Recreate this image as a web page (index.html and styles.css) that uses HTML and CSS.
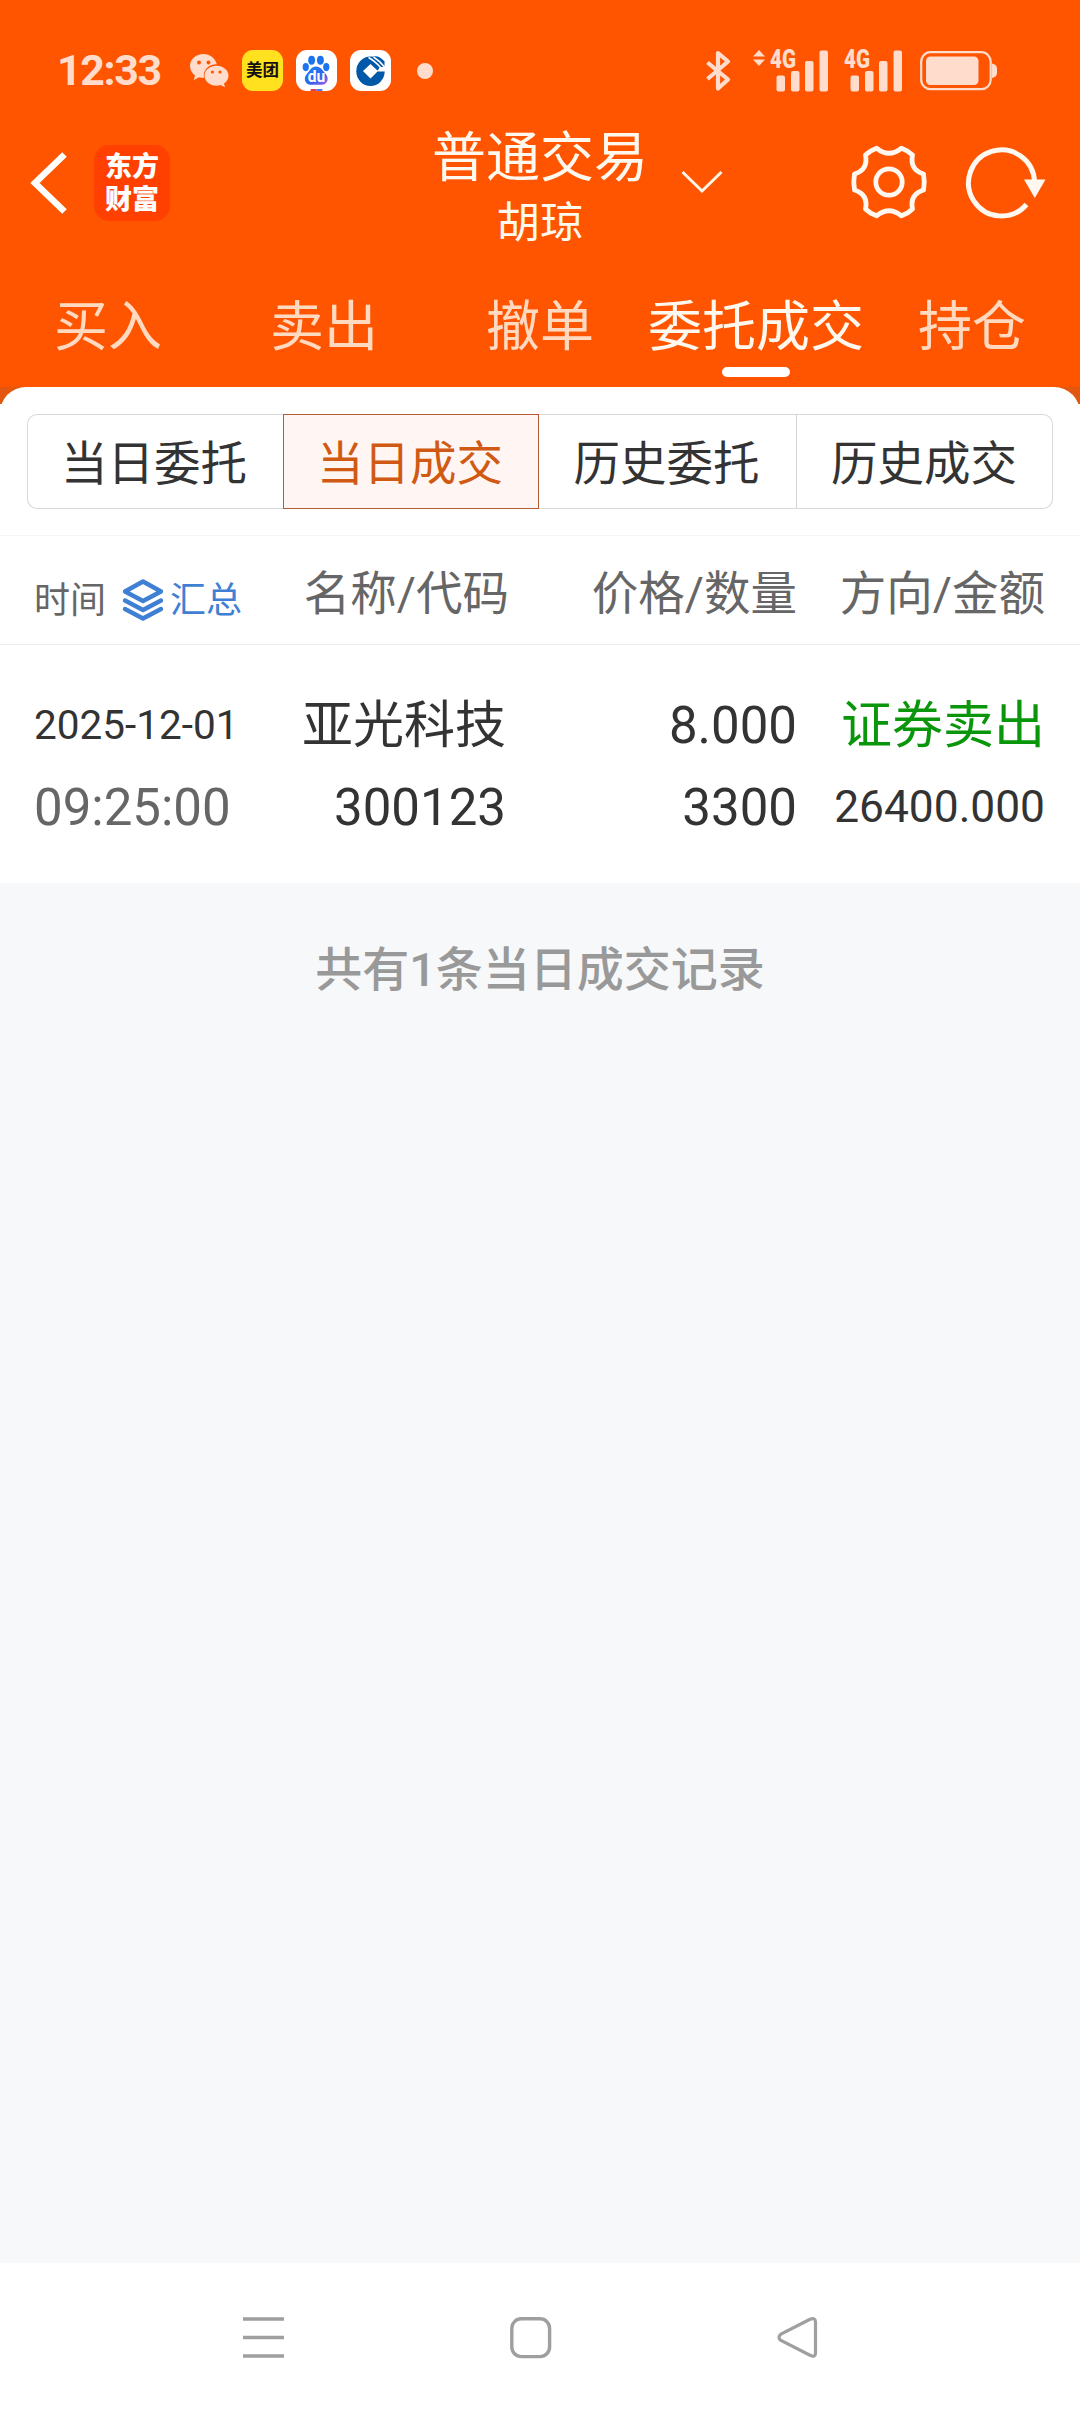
FILE: index.html
```html
<!DOCTYPE html>
<html lang="zh-CN">
<head>
    <meta charset="UTF-8">
    <meta name="viewport" content="width=device-width, initial-scale=1.0">
    <title>普通交易</title>
    <link rel="stylesheet" href="styles.css">
</head>
<body>
    <div class="top">
        <div class="status-bar">
            <span class="clock">12:33</span>
            <svg class="wechat" width="39" height="34" viewBox="0 0 39 34">
                <path fill="#ffdccb" d="M13.500 0C6 0 0 5.200 0 12c0 3.800 1.900 7.200 5 9.500L3.800 26l5.300-2.700c1.600.4 3.200.6 4.900.5C12.500 16 19 10 26.800 10.300 25.500 4.300 20 0 13.500 0z"/>
                <path fill="#ffdccb" d="M26.500 11.700c-6.700 0-12 4.400-12 10s5.300 10 12 10c1.400 0 2.800-.2 4.100-.6l4.400 2.200-1-3.900c2.800-1.900 4.500-4.600 4.500-7.700 0-5.600-5.300-10-12-10z"/>
                <g fill="#ff5500"><circle cx="9" cy="8.500" r="1.900"/><circle cx="18.500" cy="8.500" r="1.900"/><circle cx="22.500" cy="18" r="1.600"/><circle cx="30" cy="18" r="1.600"/></g>
            </svg>
            <div class="app-badge meituan">美团</div>
            <div class="app-badge">
                <svg width="41" height="41" viewBox="0 0 42 42">
                    <defs>
                        <linearGradient id="paw" x1="0" y1="0" x2="1" y2="1">
                            <stop offset="0" stop-color="#1686f5"/><stop offset=".6" stop-color="#2f64ec"/><stop offset="1" stop-color="#b05ae8"/>
                        </linearGradient>
                    </defs>
                    <g fill="#1b74ee">
                        <ellipse cx="16" cy="10.500" rx="3.500" ry="4.600"/><ellipse cx="25" cy="10.500" rx="3.500" ry="4.600"/>
                        <ellipse cx="10" cy="17.500" rx="3.200" ry="4.200"/><ellipse cx="31" cy="17.500" rx="3.200" ry="4.200"/>
                    </g>
                    <path fill="url(#paw)" d="M20.500 17c-5 0-6 4-9 7-4.500 4.500-2.500 11.500 3.500 11.500h11.500c6 0 8-7 3.500-11.500-3-3-4.500-7-9.500-7z"/>
                    <path fill="#e63a50" d="M15 40h6v2h-6z"/><path fill="#4a78ff" d="M21 40h6v2h-6z"/>
                    <text class="du" x="21" y="33" text-anchor="middle">du</text>
                </svg>
            </div>
            <div class="app-badge">
                <svg width="41" height="41" viewBox="0 0 41 41">
                    <ellipse cx="20.500" cy="21.200" rx="14.200" ry="14.800" fill="#0058a8"/>
                    <path fill="#0058a8" d="M23 6.500q6-1.500 11.500 5V17h-5z"/>
                    <path fill="#fff" d="M20.500 14l7.500 7-7.500 7.500-7.500-7.500zM27 21.500l3-4.500H36v4.500z"/>
                    <path stroke="#fff" stroke-width="1.500" fill="none" d="M18.500 7.500Q25 11 31.500 18.500M23.500 7Q30 11 35 17.500"/>
                </svg>
            </div>
            <span class="dot"></span>
            <svg class="bluetooth" width="26" height="42" viewBox="0 0 26 42">
                <path d="M2.500 12.500L23 29.500 13 38.500V3l10 8.500L2.500 29" fill="none" stroke="#ffdccb" stroke-width="4.200" stroke-linejoin="round"/>
            </svg>
            <svg class="signal" width="76" height="44" viewBox="0 0 76 44" fill="#ffdccb">
                <path d="M0 7.500L6 1l6 6.500zM0 10.500h12L6 17z"/>
                <text x="17" y="18.500" textLength="26" lengthAdjust="spacingAndGlyphs">4G</text>
                <rect x="23.500" y="26.500" width="8.500" height="16" rx="2"/><rect x="38" y="22" width="8.500" height="20.500" rx="2"/>
                <rect x="52" y="12" width="8.500" height="30.500" rx="2"/><rect x="66.500" y="1.500" width="8.500" height="41" rx="2"/>
            </svg>
            <svg class="signal second" width="59" height="44" viewBox="17 0 59 44" fill="#ffdccb">
                <text x="17" y="18.500" textLength="26" lengthAdjust="spacingAndGlyphs">4G</text>
                <rect x="23.500" y="26.500" width="8.500" height="16" rx="2"/><rect x="38" y="22" width="8.500" height="20.500" rx="2"/>
                <rect x="52" y="12" width="8.500" height="30.500" rx="2"/><rect x="66.500" y="1.500" width="8.500" height="41" rx="2"/>
            </svg>
            <svg class="battery" width="78" height="40" viewBox="0 0 78 40">
                <rect x="1.200" y="1.200" width="69.500" height="37" rx="9.500" fill="none" stroke="#ffdccb" stroke-width="2.200"/>
                <rect x="6" y="5.500" width="52.500" height="28.500" rx="4.500" fill="#ffdccb"/>
                <path fill="#ffdccb" d="M72 12.500q5 1 5 5v4.500q0 4-5 5z"/>
            </svg>
        </div>

        <div class="title-bar">
            <svg class="back" width="40" height="66" viewBox="0 0 40 66"><path d="M36.500 4.500L7 33l29.500 28.500" fill="none" stroke="#fff" stroke-width="6.500"/></svg>
            <div class="logo"><span>东方</span><span>财富</span></div>
            <div class="account">
                <div class="account-type">普通交易</div>
                <div class="account-name">胡琼</div>
            </div>
            <svg class="arrow-down" width="42" height="24" viewBox="0 0 42 24"><path d="M1.500 1L21 20 40.500 1" fill="none" stroke="#fff5ea" stroke-width="3"/></svg>
            <svg class="gear" width="78" height="78" viewBox="-39 -38 78 78" fill="none" stroke="#fff8f0" stroke-width="4.800">
                <circle r="13.200"/>
                <path stroke-linejoin="round" d="M-12.500 -33.800Q0 -23.500 12.500 -33.800Q19 -31.500 23.500 -27Q20.500 -12.500 34.500 -8Q36 0 34.500 8Q20.500 12.500 23.500 27Q19 31.500 12.500 33.800Q0 23.500 -12.500 33.800Q-19 31.500 -23.500 27Q-20.500 12.500 -34.500 8Q-36 0 -34.500 -8Q-20.500 -12.500 -23.500 -27Q-19 -31.500 -12.500 -33.800z"/>
            </svg>
            <svg class="refresh" width="82" height="74" viewBox="0 1 82 74">
                <path d="M61.500 59.500A33 33 0 1 1 69.500 37" fill="none" stroke="#fff8f0" stroke-width="5"/>
                <path d="M59 34.500h21.500L69.800 53z" fill="#fff8f0"/>
            </svg>
        </div>

        <div class="tabs">
            <div class="tab">买入</div>
            <div class="tab">卖出</div>
            <div class="tab">撤单</div>
            <div class="tab active">委托成交</div>
            <div class="tab">持仓</div>
        </div>
    </div>

    <div class="sheet-wrap">
        <div class="sheet">
            <div class="segments">
                <div class="segment">当日委托</div>
                <div class="segment selected">当日成交</div>
                <div class="segment">历史委托</div>
                <div class="segment">历史成交</div>
            </div>
            <div class="row table-head">
                <div class="col time">
                    <span>时间</span>
                    <svg width="42" height="42" viewBox="0 0 42 42" fill="none" stroke="#3f7fd4" stroke-width="4.400" stroke-linejoin="round" stroke-linecap="round">
                        <path d="M21 2.500L39 12.500 21 22 3 12.500z"/><path d="M3 21.500l18 9.500 18-9.500M3 30l18 9.500 18-9.500"/>
                    </svg>
                    <span class="summary">汇总</span>
                </div>
                <div class="col name">名称/代码</div>
                <div class="col">价格/数量</div>
                <div class="col">方向/金额</div>
            </div>
            <div class="row record">
                <div class="col time">
                    <div class="line date">2025-12-01</div>
                    <div class="line clock-time">09:25:00</div>
                </div>
                <div class="col">
                    <div class="line">亚光科技</div>
                    <div class="line">300123</div>
                </div>
                <div class="col">
                    <div class="line">8.000</div>
                    <div class="line">3300</div>
                </div>
                <div class="col">
                    <div class="line sell">证券卖出</div>
                    <div class="line amount">26400.000</div>
                </div>
            </div>
        </div>
    </div>

    <div class="footer-note">共有1条当日成交记录</div>

    <div class="nav-bar">
        <svg width="42" height="42" viewBox="0 0 42 42"><path d="M0 2h41M0 20.500h41M0 39h41" stroke="#9f9f9f" stroke-width="3.600"/></svg>
        <svg width="42" height="42" viewBox="0 0 42 42"><rect x="1.800" y="1.800" width="37.800" height="37.800" rx="9.500" fill="none" stroke="#9f9f9f" stroke-width="3.400"/></svg>
        <svg width="42" height="42" viewBox="0 0 42 42"><path d="M33 2.300Q38.500 0 38.500 5V36Q38.500 41 33 38.300L4 23.500Q0 20.500 4 17z" fill="none" stroke="#9f9f9f" stroke-width="3.200"/></svg>
    </div>
</body>
</html>
```

FILE: styles.css
```css
* { box-sizing: border-box; margin: 0; padding: 0; }
body {
    font-family: Roboto, "Noto Sans CJK SC", sans-serif;
    background-color: #f7f8fa;
    color: #333;
    width: 1080px;
    height: 2412px;
    display: flex;
    flex-direction: column;
    overflow: hidden;
}
svg {
    display: block;
    flex-shrink: 0;
    overflow: visible;
}
.top {
    background-color: #ff5500;
    height: 387px;
}

/* status bar */
.status-bar {
    display: flex;
    align-items: center;
    height: 120px;
    padding: 21px 82px 0 57px;
}
.clock {
    width: 133px;
    font-size: 43px;
    font-weight: 700;
    line-height: 42px;
    letter-spacing: -1.4px;
    padding-bottom: 2px;
    color: #ffdccb;
}
.wechat {
    margin-right: 13px;
}
.app-badge {
    width: 41px;
    height: 41px;
    margin-right: 13px;
    border-radius: 11px;
    background-color: #fff;
    overflow: hidden;
}
.meituan {
    background-color: #ffe11f;
    color: #111;
    font-size: 16.5px;
    font-weight: 700;
    line-height: 42px;
    text-align: center;
}
.du {
    fill: #fff;
    font-size: 16px;
    font-weight: 700;
}
.dot {
    width: 16px;
    height: 16px;
    margin-left: 13px;
    border-radius: 50%;
    background-color: #ffdccb;
}
.bluetooth {
    margin-left: auto;
    margin-right: 22px;
}
.signal text {
    font-size: 25px;
    font-weight: 900;
}
.signal {
    margin-right: 15px;
}
.second {
    margin-right: 17px;
}

/* title bar */
.title-bar {
    display: flex;
    align-items: center;
    height: 126px;
    padding: 0 31px 0 28px;
}
.logo {
    width: 76px;
    height: 76px;
    margin-left: 26px;
    padding-top: 3px;
    border-radius: 15px;
    background-color: #ff4000;
    color: #fff;
    font-family: "Noto Sans CJK SC", sans-serif;
    font-size: 27px;
    font-weight: 900;
    line-height: 33px;
    text-align: center;
}
.logo span {
    display: block;
}
.account {
    width: 216px;
    margin-left: 262px;
    padding-top: 10px;
    color: #fff8ee;
    text-align: center;
}
.account-type {
    font-size: 54px;
    line-height: 70px;
}
.account-name {
    font-size: 43.5px;
    line-height: 59px;
}
.arrow-down {
    margin-left: 33px;
}
.gear {
    margin-left: 127px;
}
.refresh {
    margin-left: 37px;
}

/* main tabs */
.tabs {
    display: grid;
    grid-template-columns: repeat(5, 216px);
    height: 141px;
}
.tab {
    display: flex;
    flex-direction: column;
    align-items: center;
    padding-top: 42px;
    color: #ffd9c0;
    font-size: 54px;
    line-height: 79px;
    white-space: nowrap;
}
.tab.active {
    color: #fff8ee;
}
.tab.active::after {
    content: '';
    width: 68px;
    height: 10px;
    border-radius: 5px;
    background-color: #fff;
}

.sheet-wrap {
    background: linear-gradient(#e2560f 17px, #fff 17px);
}
.sheet {
    background-color: #fff;
    border-radius: 26px 26px 0 0;
    padding-top: 27px;
    height: 496px;
}
.segments {
    display: grid;
    grid-template-columns: 256px 256px 257px 257px;
    width: 1026px;
    height: 95px;
    margin: 0 auto 26px;
    border-radius: 10px;
    box-shadow: inset 0 0 0 1px #d5d9d9;
}
.segment {
    padding-right: 2px;
    font-size: 46.5px;
    line-height: 101px;
    height: 95px;
    text-align: center;
}
.segment:last-child {
    border-left: 1px solid #d0d5d5;
}
.segment.selected {
    border: 1px solid #b55c35;
    background-color: #fff6f3;
    color: #d05a14;
    line-height: 99px;
}

/* records table */
.row {
    display: grid;
    grid-template-columns: 215px 257px 291px 248px;
    padding: 0 34px;
}
.col {
    text-align: right;
}
.table-head {
    height: 110px;
    border-top: 1px solid #f5f5f5;
    border-bottom: 1px solid #ebebeb;
    color: #666;
    font-size: 46.5px;
    line-height: 117px;
}
.table-head .name {
    margin-right: -3px;
}
.time {
    text-align: left;
}
.table-head .time {
    display: flex;
    align-items: center;
    font-size: 36px;
    line-height: 60px;
    padding-top: 12px;
}
.table-head .time svg {
    margin: -2px 6px 0 16px;
}
.summary {
    color: #3f7fd4;
}
.record {
    padding-top: 40px;
    font-size: 51px;
}
.line {
    height: 82px;
    line-height: 82px;
    white-space: nowrap;
}
.date {
    font-size: 40.5px;
    line-height: 81px;
}
.clock-time {
    color: #666;
}
.sell {
    color: #0a960a;
}
.amount {
    font-size: 44.3px;
    line-height: 81px;
}
.footer-note {
    padding-top: 47px;
    color: #999;
    font-size: 47px;
    font-weight: 500;
    line-height: 80px;
    text-align: center;
}

/* system navigation */
.nav-bar {
    display: flex;
    justify-content: center;
    gap: 225px;
    height: 149px;
    margin-top: auto;
    padding: 54px 18px 0 0;
    background-color: #fff;
}
```
